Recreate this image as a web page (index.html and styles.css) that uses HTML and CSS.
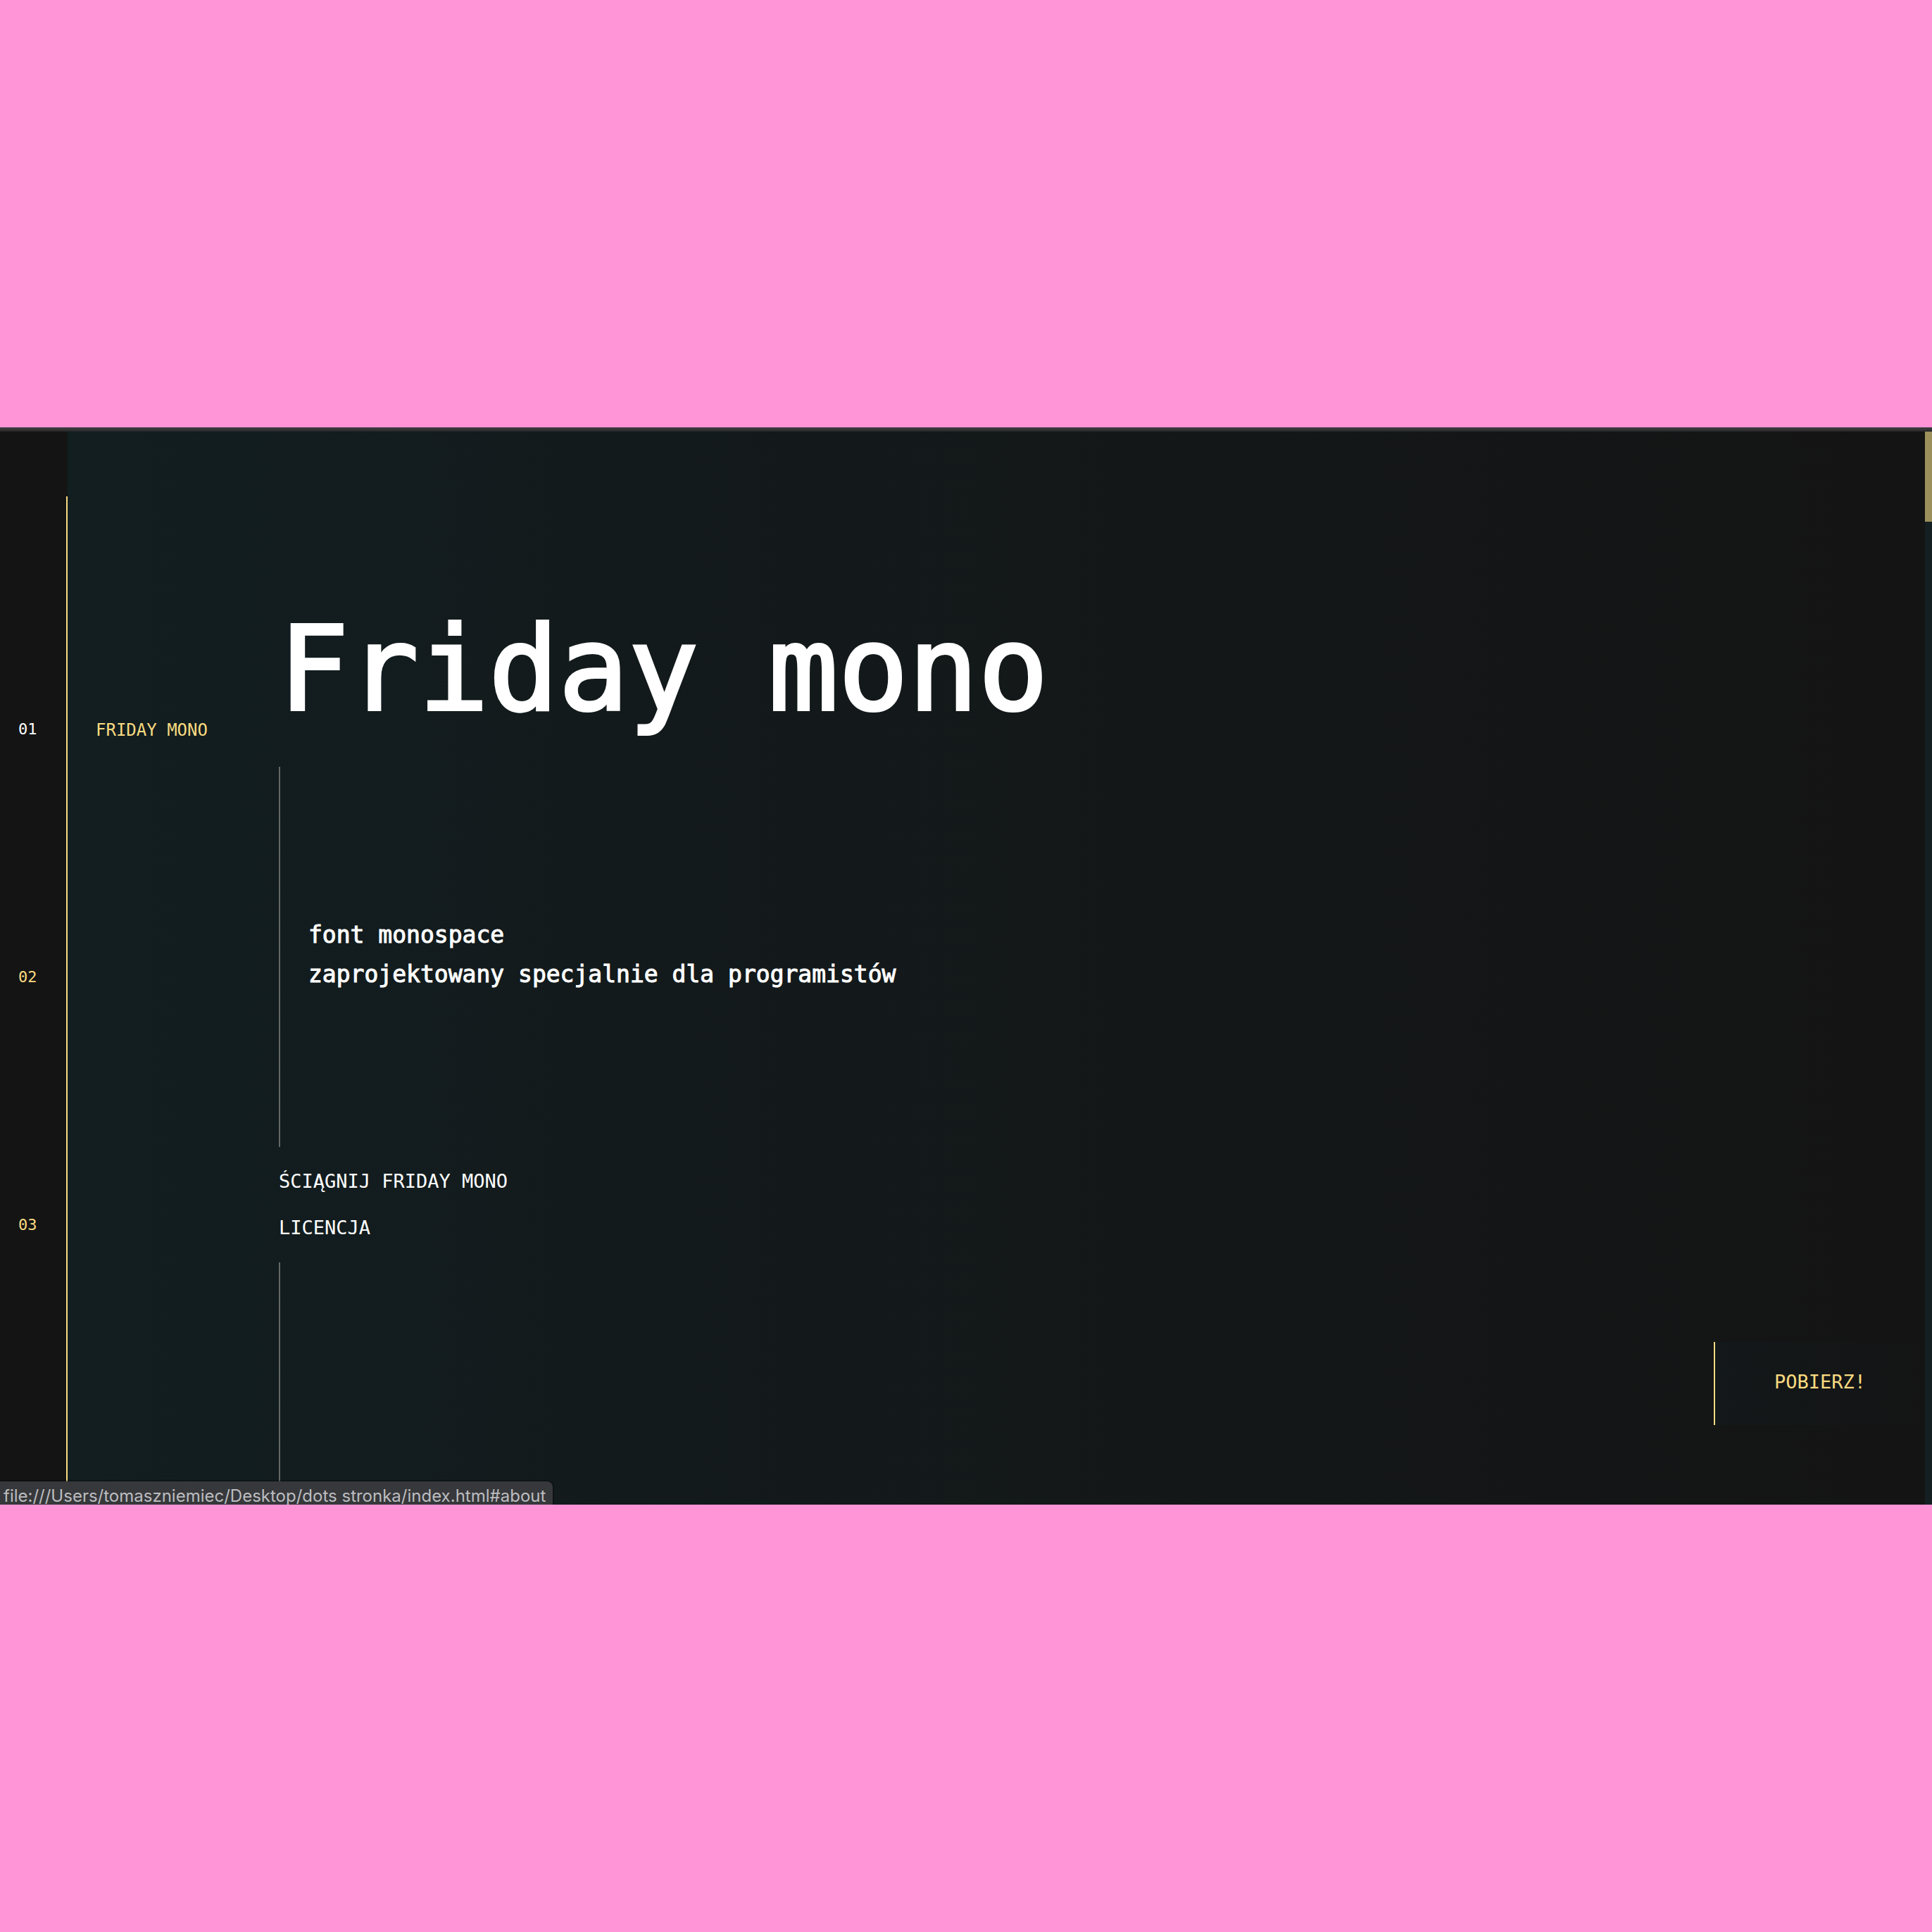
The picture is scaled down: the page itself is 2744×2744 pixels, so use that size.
FILE: index.html
```html
<!DOCTYPE html>
<html lang="pl">
<head>
  <meta charset="utf-8">
  <meta name="viewport" content="width=device-width, initial-scale=1">
  <title>Friday mono</title>
  <link rel="stylesheet" href="styles.css">
</head>
<body>
  <div class="window">
    <div class="window-edge"></div>
    <div class="page">
      <nav class="rail" aria-label="Sekcje">
        <ol class="rail-list">
          <li><a class="active" href="#home">01</a></li>
          <li><a href="#about">02</a></li>
          <li><a href="#download">03</a></li>
        </ol>
      </nav>
      <div class="section-label"><a href="#home">FRIDAY MONO</a></div>
      <main class="hero">
        <h1>Friday mono</h1>
        <div class="lead">
          <p>font monospace<br>zaprojektowany specjalnie dla programistów</p>
        </div>
        <ul class="links">
          <li><a href="#download">ŚCIĄGNIJ FRIDAY MONO</a></li>
          <li><a href="#license">LICENCJA</a></li>
        </ul>
        <div class="tail"></div>
      </main>
      <button class="download" type="button">POBIERZ!</button>
      <div class="scrollbar"><div class="thumb"></div></div>
      <div class="status">file:///Users/tomaszniemiec/Desktop/dots stronka/index.html#about</div>
    </div>
  </div>
</body>
</html>
```
FILE: styles.css
```css
* {
  box-sizing: border-box;
}

body {
  margin: 0;
  min-height: 100vh;
  display: flex;
  flex-direction: column;
  justify-content: center;
  background: #ff94d6;
  color: #fff;
  font-family: "DejaVu Sans Mono", monospace;
}

a {
  color: inherit;
  text-decoration: none;
}

ol,
ul {
  margin: 0;
  padding: 0;
  list-style: none;
}

.window-edge {
  height: 6px;
  background: #37373a;
  border-bottom: 2px solid #29292b;
}

.page {
  position: relative;
  display: flex;
  overflow: hidden;
  background: linear-gradient(to right, #121e20 4%, #131a1c 32%, #141414 96%);
}

.rail {
  width: 96px;
  padding-top: 92px;
  display: flex;
  background: #141414;
}

.rail-list {
  flex: 1;
  padding: 154px 0 0 26px;
  border-right: 2px solid #f9db80;
  color: #f9db80;
  font-size: 22px;
}

.rail-list li {
  height: 352px;
  display: flex;
  align-items: center;
}

.rail-list .active {
  color: #fff;
}

.section-label {
  width: 300px;
  padding: 409px 0 0 40px;
  color: #f9db80;
  font-size: 24px;
  line-height: 30px;
}

.hero {
  flex: 1;
  display: flex;
  flex-direction: column;
  padding-top: 238px;
}

h1 {
  margin: 0 0 38px;
  font-size: 165px;
  font-weight: 400;
  line-height: 200px;
  -webkit-text-stroke: 4px #fff;
}

.lead {
  min-height: 540px;
  padding: 0 0 6px 40px;
  display: flex;
  align-items: center;
  border-left: 2px solid #656767;
}

.lead p {
  margin: 0;
  font-size: 33px;
  line-height: 56px;
  -webkit-text-stroke: 1px #fff;
}

.links {
  padding: 16px 0;
  font-size: 27px;
  line-height: 66px;
}

.tail {
  flex: 1;
  min-height: 344px;
  border-left: 2px solid #656767;
}

.download {
  align-self: flex-end;
  width: 300px;
  height: 118px;
  margin: 0 0 113px;
  padding: 0 0 6px;
  border: 0;
  border-left: 2px solid #f9db80;
  background: linear-gradient(to right, #13181a, #141414);
  color: #f9db80;
  font: 27px "DejaVu Sans Mono", monospace;
}

.scrollbar {
  width: 10px;
  background: #131f21;
}

.thumb {
  height: 128px;
  background: #9b8f5c;
}

.status {
  position: absolute;
  left: 0;
  bottom: 0;
  height: 33px;
  padding: 0 10px 0 5px;
  overflow: hidden;
  border-top-right-radius: 8px;
  background: #37383b;
  box-shadow: 0 0 3px #000;
  color: #bcbdc0;
  font: 24px/42px Inter, sans-serif;
  white-space: nowrap;
}
```
